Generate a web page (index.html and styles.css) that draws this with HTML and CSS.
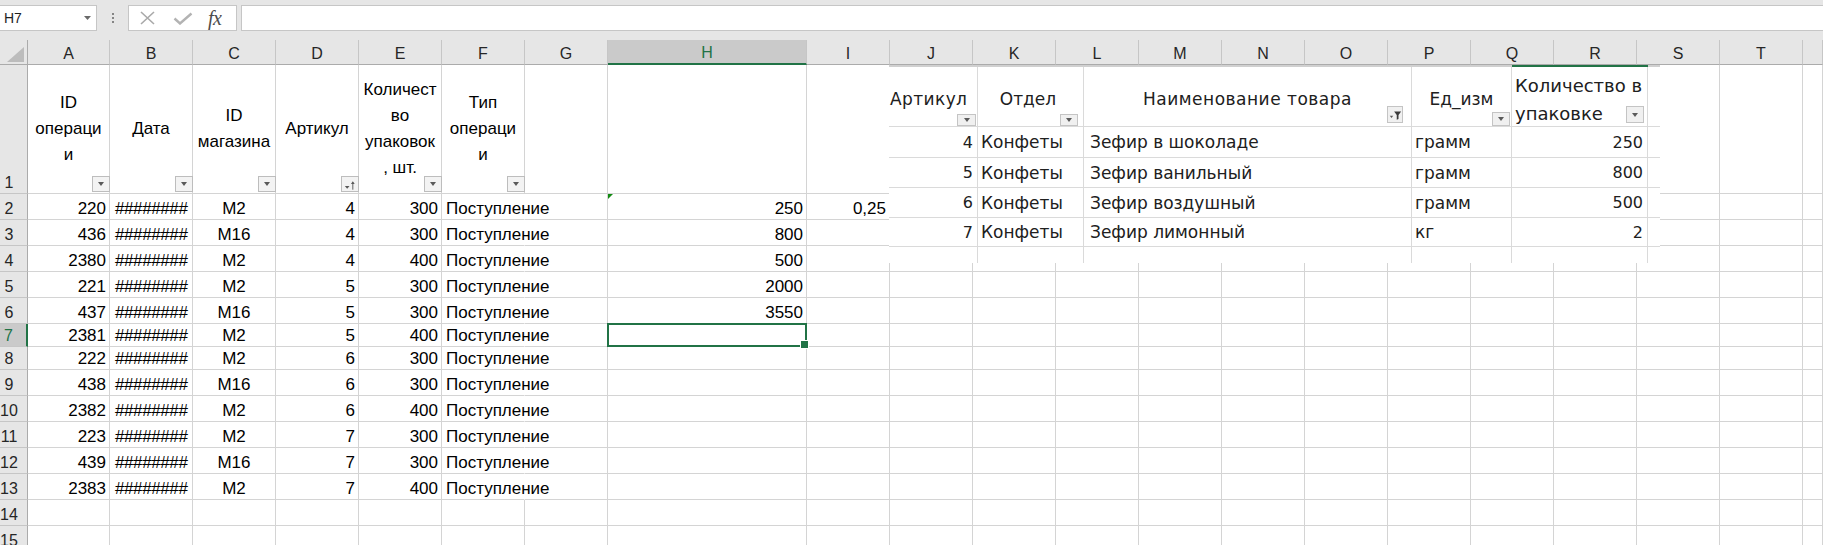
FILE: index.html
```html
<!DOCTYPE html>
<html lang="ru">
<head>
<meta charset="utf-8">
<title>Excel</title>
<link rel="stylesheet" href="styles.css">
</head>
<body>
<div class="fbar">
  <div class="namebox"><span>H7</span><svg class="caret" width="7" height="4" viewBox="0 0 7 4"><path d="M0 0H7L3.5 4Z" fill="#6a6a6a"/></svg></div>
  <div class="dots"><i></i><i></i><i></i></div>
  <div class="fbtns">
    <svg class="ico-x" width="15" height="14" viewBox="0 0 15 14"><path d="M1 1L14 13M14 1L1 13" stroke="#a9a9a9" stroke-width="1.6" fill="none"/></svg>
    <svg class="ico-ok" width="20" height="13" viewBox="0 0 20 13"><path d="M1.5 6.5L7 11.5L18.5 1.5" stroke="#b3b3b3" stroke-width="2.4" fill="none"/></svg>
    <span class="fx">fx</span>
  </div>
  <div class="finput"></div>
</div>

<div class="sheet">
  <div class="row hdr">
    <div class="corner"><svg width="17" height="15" viewBox="0 0 17 15"><path d="M17 0V15H0Z" fill="#bcbcbc"/></svg></div>
    <div>A</div><div>B</div><div>C</div><div>D</div><div>E</div><div>F</div><div>G</div>
    <div class="hsel">H</div><div>I</div><div>J</div><div>K</div><div>L</div><div>M</div><div>N</div><div>O</div><div>P</div><div>Q</div><div>R</div><div>S</div><div>T</div><div></div>
  </div>

  <div class="row r1">
    <div class="rh">1</div>
    <div class="th"><span>ID<br>операци<br>и</span><i class="fb"></i></div>
    <div class="th"><span>Дата</span><i class="fb"></i></div>
    <div class="th"><span>ID<br>магазина</span><i class="fb"></i></div>
    <div class="th"><span>Артикул</span><i class="fb sort"><svg width="17" height="13" viewBox="0 0 17 13"><path d="M3 8H8L5.5 11Z" fill="#595959"/><path d="M11.5 12V4" stroke="#595959" stroke-width="1"/><path d="M9.5 6L11.5 3L13.5 6Z" fill="#595959"/></svg></i></div>
    <div class="th"><span>Количест<br>во<br>упаковок<br>, шт.</span><i class="fb"></i></div>
    <div class="th"><span>Тип<br>операци<br>и</span><i class="fb"></i></div>
    <div></div><div></div><div></div>
    <div></div><div></div><div></div><div></div><div></div><div></div><div></div><div></div><div></div><div></div><div></div><div></div>
  </div>

  <div class="row rn">
    <div class="rh">2</div><div class="r">220</div><div class="hash">########</div><div class="c">M2</div><div class="r">4</div><div class="r">300</div><div class="ov">Поступление</div><div></div><div class="r err">250</div><div class="r">0,25</div>
    <div></div><div></div><div></div><div></div><div></div><div></div><div></div><div></div><div></div><div></div><div></div><div></div>
  </div>
  <div class="row rn">
    <div class="rh">3</div><div class="r">436</div><div class="hash">########</div><div class="c">M16</div><div class="r">4</div><div class="r">300</div><div class="ov">Поступление</div><div></div><div class="r">800</div><div></div>
    <div></div><div></div><div></div><div></div><div></div><div></div><div></div><div></div><div></div><div></div><div></div><div></div>
  </div>
  <div class="row rn">
    <div class="rh">4</div><div class="r">2380</div><div class="hash">########</div><div class="c">M2</div><div class="r">4</div><div class="r">400</div><div class="ov">Поступление</div><div></div><div class="r">500</div><div></div>
    <div></div><div></div><div></div><div></div><div></div><div></div><div></div><div></div><div></div><div></div><div></div><div></div>
  </div>
  <div class="row rn">
    <div class="rh">5</div><div class="r">221</div><div class="hash">########</div><div class="c">M2</div><div class="r">5</div><div class="r">300</div><div class="ov">Поступление</div><div></div><div class="r">2000</div><div></div>
    <div></div><div></div><div></div><div></div><div></div><div></div><div></div><div></div><div></div><div></div><div></div><div></div>
  </div>
  <div class="row rn">
    <div class="rh">6</div><div class="r">437</div><div class="hash">########</div><div class="c">M16</div><div class="r">5</div><div class="r">300</div><div class="ov">Поступление</div><div></div><div class="r">3550</div><div></div>
    <div></div><div></div><div></div><div></div><div></div><div></div><div></div><div></div><div></div><div></div><div></div><div></div>
  </div>
  <div class="row rs">
    <div class="rh rsel">7</div><div class="r">2381</div><div class="hash">########</div><div class="c">M2</div><div class="r">5</div><div class="r">400</div><div class="ov">Поступление</div><div></div><div class="sel"></div><div></div>
    <div></div><div></div><div></div><div></div><div></div><div></div><div></div><div></div><div></div><div></div><div></div><div></div>
  </div>
  <div class="row rs">
    <div class="rh">8</div><div class="r">222</div><div class="hash">########</div><div class="c">M2</div><div class="r">6</div><div class="r">300</div><div class="ov">Поступление</div><div></div><div></div><div></div>
    <div></div><div></div><div></div><div></div><div></div><div></div><div></div><div></div><div></div><div></div><div></div><div></div>
  </div>
  <div class="row rn">
    <div class="rh">9</div><div class="r">438</div><div class="hash">########</div><div class="c">M16</div><div class="r">6</div><div class="r">300</div><div class="ov">Поступление</div><div></div><div></div><div></div>
    <div></div><div></div><div></div><div></div><div></div><div></div><div></div><div></div><div></div><div></div><div></div><div></div>
  </div>
  <div class="row rn">
    <div class="rh">10</div><div class="r">2382</div><div class="hash">########</div><div class="c">M2</div><div class="r">6</div><div class="r">400</div><div class="ov">Поступление</div><div></div><div></div><div></div>
    <div></div><div></div><div></div><div></div><div></div><div></div><div></div><div></div><div></div><div></div><div></div><div></div>
  </div>
  <div class="row rn">
    <div class="rh">11</div><div class="r">223</div><div class="hash">########</div><div class="c">M2</div><div class="r">7</div><div class="r">300</div><div class="ov">Поступление</div><div></div><div></div><div></div>
    <div></div><div></div><div></div><div></div><div></div><div></div><div></div><div></div><div></div><div></div><div></div><div></div>
  </div>
  <div class="row rn">
    <div class="rh">12</div><div class="r">439</div><div class="hash">########</div><div class="c">M16</div><div class="r">7</div><div class="r">300</div><div class="ov">Поступление</div><div></div><div></div><div></div>
    <div></div><div></div><div></div><div></div><div></div><div></div><div></div><div></div><div></div><div></div><div></div><div></div>
  </div>
  <div class="row rn">
    <div class="rh">13</div><div class="r">2383</div><div class="hash">########</div><div class="c">M2</div><div class="r">7</div><div class="r">400</div><div class="ov">Поступление</div><div></div><div></div><div></div>
    <div></div><div></div><div></div><div></div><div></div><div></div><div></div><div></div><div></div><div></div><div></div><div></div>
  </div>
  <div class="row rn">
    <div class="rh">14</div><div></div><div></div><div></div><div></div><div></div><div></div><div></div><div></div><div></div>
    <div></div><div></div><div></div><div></div><div></div><div></div><div></div><div></div><div></div><div></div><div></div><div></div>
  </div>
  <div class="row rn">
    <div class="rh">15</div><div></div><div></div><div></div><div></div><div></div><div></div><div></div><div></div><div></div>
    <div></div><div></div><div></div><div></div><div></div><div></div><div></div><div></div><div></div><div></div><div></div><div></div>
  </div>

  <div class="pasted">
    <div class="pc ph pj">Артикул<i class="pb b1"></i></div>
    <div class="pc ph pk">Отдел<i class="pb b2"></i></div>
    <div class="pc ph pl">Наименование товара<i class="pb b3"><svg width="16" height="17" viewBox="0 0 16 17"><path d="M2 10H6L4 12.5Z" fill="#595959"/><path d="M7 5H15L12 9V13.5L10 14.5V9Z" fill="#3a3a3a"/></svg></i></div>
    <div class="pc ph pp">Ед_изм<i class="pb b4"></i></div>
    <div class="pc ph pr"><span>Количество в<br>упаковке</span><i class="pb b5"></i></div>
    <div class="pc pe"></div>

    <div class="pc pn">4</div><div class="pc">Конфеты</div><div class="pc pt">Зефир в шоколаде</div><div class="pc pu">грамм</div><div class="pc pn">250</div><div class="pc pe"></div>
    <div class="pc pn">5</div><div class="pc">Конфеты</div><div class="pc pt">Зефир ванильный</div><div class="pc pu">грамм</div><div class="pc pn">800</div><div class="pc pe"></div>
    <div class="pc pn">6</div><div class="pc">Конфеты</div><div class="pc pt">Зефир воздушный</div><div class="pc pu">грамм</div><div class="pc pn">500</div><div class="pc pe"></div>
    <div class="pc pn">7</div><div class="pc">Конфеты</div><div class="pc pt">Зефир лимонный</div><div class="pc pu">кг</div><div class="pc pn">2</div><div class="pc pe"></div>
    <div class="pc plast"></div><div class="pc plast"></div><div class="pc plast"></div><div class="pc plast"></div><div class="pc plast"></div><div class="pc pe plast"></div>
  </div>
</div>
</body>
</html>
```

FILE: styles.css
```css
* {
  box-sizing: border-box;
  margin: 0;
  padding: 0;
}

body {
  width: 1823px;
  height: 545px;
  overflow: hidden;
  background: #ffffff;
  font-family: "Liberation Sans", Arial, sans-serif;
}

/* ---------- formula bar ---------- */
.fbar {
  height: 40px;
  background: #e6e6e6;
  display: flex;
  align-items: flex-start;
  padding-top: 5px;
}

.namebox {
  width: 97px;
  height: 26px;
  background: #ffffff;
  border: 1px solid #c6c6c6;
  border-left: none;
  display: flex;
  align-items: center;
  justify-content: space-between;
  padding: 0 5px 0 4px;
  font-size: 14px;
  color: #1e1e1e;
}

.dots {
  width: 31px;
  height: 26px;
  display: flex;
  flex-direction: column;
  align-items: center;
  justify-content: center;
  gap: 2px;
}

.dots i {
  display: block;
  width: 2px;
  height: 2px;
  background: #858585;
}

.fbtns {
  width: 109px;
  height: 26px;
  background: #ffffff;
  border: 1px solid #c6c6c6;
  display: flex;
  align-items: center;
  padding-left: 11px;
}

.ico-x {
  margin-right: 18px;
}

.ico-ok {
  margin-right: 15px;
}

.fx {
  font-family: "Liberation Serif", "Times New Roman", serif;
  font-style: italic;
  font-size: 20px;
  line-height: 20px;
  color: #4d4d4d;
  letter-spacing: -0.5px;
}

.finput {
  flex: 1;
  height: 26px;
  margin-left: 4px;
  background: #ffffff;
  border: 1px solid #c6c6c6;
  border-right: none;
}

/* ---------- sheet ---------- */
.sheet {
  position: relative;
}

.row {
  display: grid;
  grid-template-columns: 28px 82px repeat(6, 83px) 199px repeat(12, 83px) 1fr;
}

.hdr { height: 25px; }
.r1 { height: 129px; }
.rn { height: 26px; }
.rs { height: 23px; }

.row > div {
  border-right: 1px solid #d4d4d4;
  border-bottom: 1px solid #d4d4d4;
  display: flex;
  align-items: flex-end;
  padding: 0 4px;
  font-size: 17px;
  line-height: 20px;
  color: #000000;
  white-space: nowrap;
  overflow: hidden;
}

.hdr > div {
  background: #e6e6e6;
  border-right-color: #c6c6c6;
  border-bottom-color: #ababab;
  justify-content: center;
  font-size: 16px;
  color: #262626;
  padding: 0;
}

.hdr > .corner {
  justify-content: flex-end;
  padding: 0 3px 2px 0;
  border-right-color: #ababab;
}

.hdr > .hsel {
  background: #cacaca;
  color: #217346;
  border-bottom: 2px solid #217346;
}

.row > .rh {
  background: #e6e6e6;
  border-right-color: #ababab;
  border-bottom-color: #c6c6c6;
  justify-content: center;
  padding: 0 9px 0 0;
  font-size: 16px;
  color: #262626;
}

.row > .rsel {
  background: #cacaca;
  color: #217346;
  border-right: 2px solid #217346;
}

.row > .r {
  justify-content: flex-end;
  padding-right: 3px;
}

.row > .c {
  justify-content: center;
}

.row > .hash {
  padding-left: 5px;
  letter-spacing: -0.4px;
}

.row > .ov {
  overflow: visible;
  border-right-color: transparent;
}

.row > .th {
  position: relative;
  align-items: center;
  justify-content: center;
  text-align: center;
  line-height: 26px;
  padding: 0;
  overflow: visible;
}

.fb {
  position: absolute;
  right: -1px;
  bottom: 1px;
  width: 18px;
  height: 16px;
  background: #f3f3f3;
  border: 1px solid #bdbdbd;
  display: flex;
  align-items: center;
  justify-content: center;
}

.fb::after {
  content: "";
  border-left: 3.5px solid transparent;
  border-right: 3.5px solid transparent;
  border-top: 4px solid #5a5a5a;
}

.fb.sort::after {
  display: none;
}

.row > .err {
  position: relative;
}

.err::before {
  content: "";
  position: absolute;
  top: 0;
  left: 0;
  border-top: 5px solid #138a13;
  border-right: 5px solid transparent;
}

.row > .sel {
  position: relative;
  overflow: visible;
}

.sel::before {
  content: "";
  position: absolute;
  left: -1px;
  top: -1px;
  right: -1px;
  bottom: -1px;
  border: 2px solid #217346;
}

.sel::after {
  content: "";
  position: absolute;
  right: -3px;
  bottom: -3px;
  width: 7px;
  height: 7px;
  background: #217346;
  border: 1px solid #ffffff;
}

/* ---------- pasted picture of another sheet ---------- */
.pasted {
  position: absolute;
  left: 889px;
  top: 25px;
  width: 771px;
  height: 198px;
  background: #ffffff;
  border-top: 2px solid #d0d0d0;
  display: grid;
  grid-template-columns: 89px 106px 328px 100px 136px 12px;
  grid-template-rows: 60px 31px 30px 30px 29px 16px;
  font-family: "DejaVu Sans", Verdana, sans-serif;
  font-size: 17px;
  color: #202020;
}

.pc {
  position: relative;
  border-right: 1px solid #dadada;
  border-bottom: 1px solid #dadada;
  display: flex;
  align-items: center;
  padding: 0 3px;
  white-space: nowrap;
  overflow: hidden;
}

.pc.pe {
  border-right: none;
}

.pc.plast {
  border-bottom: none;
}

.ph {
  justify-content: center;
  padding-top: 4px;
}

.ph.pj {
  justify-content: flex-start;
  padding-left: 1px;
  letter-spacing: 0.4px;
}

.ph.pk {
  padding-right: 8px;
}

.ph.pl {
  letter-spacing: 0.5px;
}

.ph.pr {
  justify-content: flex-start;
  padding-left: 3px;
  padding-top: 7px;
  font-size: 18px;
  line-height: 28px;
  overflow: visible;
  box-shadow: 0 -2px 0 #217346;
}

.pn {
  justify-content: flex-end;
  padding-right: 4px;
  font-size: 16px;
}

.pt {
  padding-left: 6px;
}

.pu {
  padding-left: 3px;
}

.pb {
  position: absolute;
  background: #f0f0f0;
  border: 1px solid #c4c4c4;
  display: flex;
  align-items: center;
  justify-content: center;
}

.pb::after {
  content: "";
  border-left: 3.5px solid transparent;
  border-right: 3.5px solid transparent;
  border-top: 4px solid #5a5a5a;
}

.pb.b3::after {
  display: none;
}

.b1 { right: 1px; bottom: 0; width: 19px; height: 12px; }
.b2 { right: 5px; bottom: 0; width: 18px; height: 12px; }
.b3 { right: 8px; bottom: 3px; width: 16px; height: 17px; }
.b4 { right: 1px; bottom: 0; width: 18px; height: 14px; }
.b5 { right: 3px; bottom: 3px; width: 18px; height: 17px; }
```
